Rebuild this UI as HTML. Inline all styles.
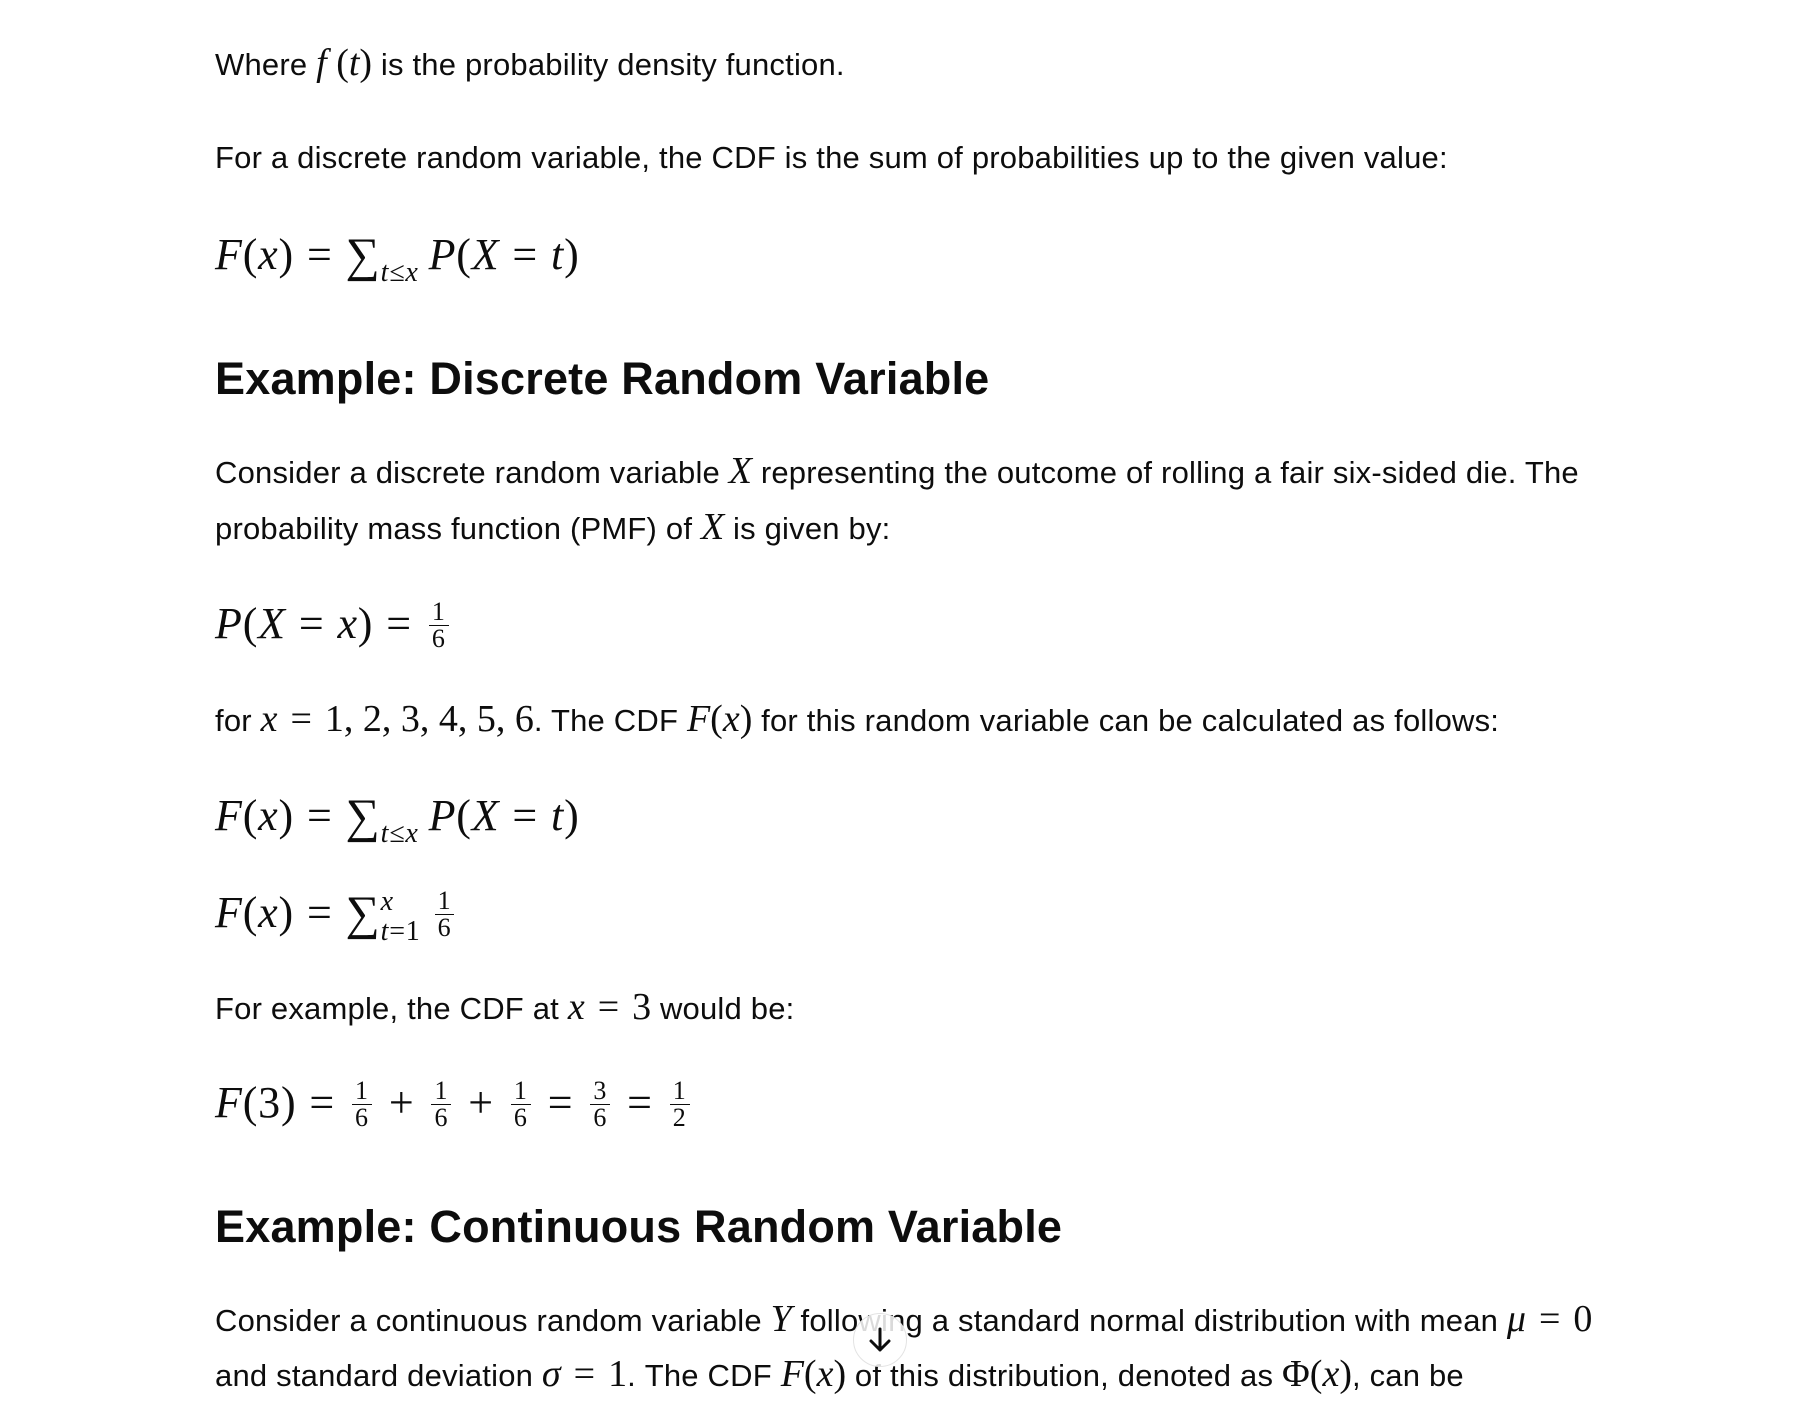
<!DOCTYPE html>
<html><head><meta charset="utf-8"><style>
html,body{margin:0;padding:0;background:#fff;}
body{width:1796px;height:1396px;position:relative;overflow:hidden;color:#0d0d0d;font-family:"Liberation Sans",sans-serif;}
.l{position:absolute;left:215px;font-size:31px;line-height:56px;height:56px;white-space:nowrap;letter-spacing:0.2px;}
.h{position:absolute;left:215px;font-size:45px;font-weight:bold;line-height:60px;white-space:nowrap;letter-spacing:0.2px;}
.m{font-family:"Liberation Serif","DejaVu Serif",serif;font-size:38px;letter-spacing:0;}
.i{font-style:italic;}
.eq{font-family:"Liberation Serif","DejaVu Serif",serif;font-size:44px;letter-spacing:0.8px;}
.op{margin:0 13px;}
.sum{font-size:48px;position:relative;top:2px;}
.sub{font-size:28px;font-style:italic;position:relative;top:12px;margin-right:10px;}
.fr{display:inline-block;vertical-align:middle;text-align:center;font-size:26px;line-height:26px;margin:0 4px;position:relative;top:-2px;}
.fr>span{display:block;padding:0 3px;}
.fr>span:first-child{border-bottom:1.5px solid #0d0d0d;}
.ss{display:inline-block;vertical-align:middle;font-size:28px;line-height:30px;position:relative;top:0px;margin-right:10px;}
.ss>span{display:block;white-space:nowrap;}
</style></head><body>
<div class="l" style="top:35px">Where <span class="m i">f</span><span class="m"> (</span><span class="m i">t</span><span class="m">)</span> is the probability density function.</div>
<div class="l" style="top:130px">For a discrete random variable, the CDF is the sum of probabilities up to the given value:</div>
<div class="l eq" style="top:226px"><span class="i">F</span>(<span class="i">x</span>)<span class="op">=</span><span class="sum">∑</span><span class="sub">t≤x</span><span class="i">P</span>(<span class="i">X</span><span class="op">=</span><span class="i">t</span>)</div>
<div class="h" style="top:349px">Example: Discrete Random Variable</div>
<div class="l" style="top:443px">Consider a discrete random variable <span class="m i">X</span> representing the outcome of rolling a fair six-sided die. The</div>
<div class="l" style="top:499px">probability mass function (PMF) of <span class="m i">X</span> is given by:</div>
<div class="l eq" style="top:596px"><span class="i">P</span>(<span class="i">X</span><span class="op">=</span><span class="i">x</span>)<span class="op">=</span><span class="fr"><span>1</span><span>6</span></span></div>
<div class="l" style="top:691px">for <span class="m i">x</span><span class="m op">=</span><span class="m">1, 2, 3, 4, 5, 6</span>. The CDF <span class="m i">F</span><span class="m">(</span><span class="m i">x</span><span class="m">)</span> for this random variable can be calculated as follows:</div>
<div class="l eq" style="top:787px"><span class="i">F</span>(<span class="i">x</span>)<span class="op">=</span><span class="sum">∑</span><span class="sub">t≤x</span><span class="i">P</span>(<span class="i">X</span><span class="op">=</span><span class="i">t</span>)</div>
<div class="l eq" style="top:884px"><span class="i">F</span>(<span class="i">x</span>)<span class="op">=</span><span class="sum">∑</span><span class="ss"><span class="i">x</span><span><span class="i">t</span>=1</span></span><span class="fr"><span>1</span><span>6</span></span></div>
<div class="l" style="top:979px">For example, the CDF at <span class="m i">x</span><span class="m op">=</span><span class="m">3</span> would be:</div>
<div class="l eq" style="top:1075px"><span class="i">F</span>(3)<span class="op">=</span><span class="fr"><span>1</span><span>6</span></span><span class="op">+</span><span class="fr"><span>1</span><span>6</span></span><span class="op">+</span><span class="fr"><span>1</span><span>6</span></span><span class="op">=</span><span class="fr"><span>3</span><span>6</span></span><span class="op">=</span><span class="fr"><span>1</span><span>2</span></span></div>
<div class="h" style="top:1197px">Example: Continuous Random Variable</div>
<div class="l" style="top:1291px">Consider a continuous random variable <span class="m i">Y</span> following a standard normal distribution with mean <span class="m i">μ</span><span class="m op">=</span><span class="m">0</span></div>
<div class="l" style="top:1346px">and standard deviation <span class="m i">σ</span><span class="m op">=</span><span class="m">1</span>. The CDF <span class="m i">F</span><span class="m">(</span><span class="m i">x</span><span class="m">)</span> of this distribution, denoted as <span class="m">Φ(</span><span class="m i">x</span><span class="m">)</span>, can be</div>
<div style="position:absolute;left:853px;top:1313px;width:52px;height:52px;border-radius:50%;border:1.5px solid #e3e3e3;background:rgba(255,255,255,0.85);">
<svg width="52" height="52" viewBox="0 0 52 52" style="position:absolute;left:0;top:0"><path d="M26 15 V36 M17 27 L26 36 L35 27" fill="none" stroke="#0d0d0d" stroke-width="3" stroke-linecap="round" stroke-linejoin="round"/></svg>
</div>
</body></html>
